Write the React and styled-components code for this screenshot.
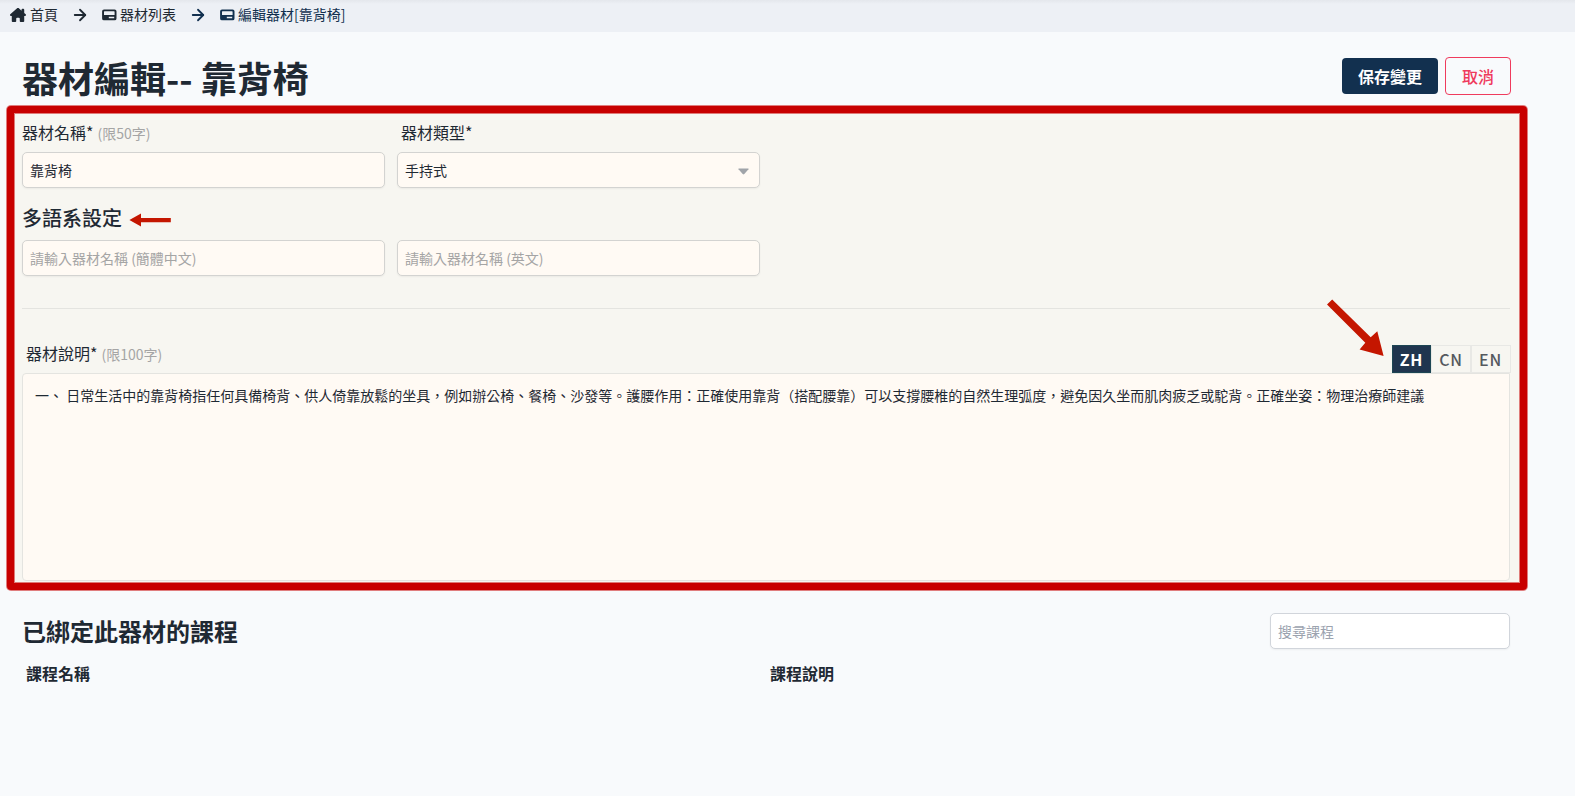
import { useState } from "react";
import styled, { createGlobalStyle, css } from "styled-components";
import { FaHouseChimney } from "react-icons/fa6";
import { ArrowRight } from "lucide-react";

const description =
  "一、 日常生活中的靠背椅指任何具備椅背、供人倚靠放鬆的坐具，例如辦公椅、餐椅、沙發等。護腰作用：正確使用靠背（搭配腰靠）可以支撐腰椎的自然生理弧度，避免因久坐而肌肉疲乏或駝背。正確坐姿：物理治療師建議";

const languages = ["ZH", "CN", "EN"];

function DeviceIcon() {
  return (
    <Device width="15" height="12" viewBox="0 0 15 12" fill="currentColor">
      <path
        fillRule="evenodd"
        d="M2 .4h10.6A1.9 1.9 0 0 1 14.5 2.3v7.1a1.9 1.9 0 0 1-1.9 1.9H2A1.9 1.9 0 0 1 .1 9.4V2.3A1.9 1.9 0 0 1 2 .4ZM2.6 2.2a.6.6 0 0 0-.6.6v3.1h10.6V2.8a.6.6 0 0 0-.6-.6ZM6.8 7.8v1.4h5.4V7.8Z"
      />
    </Device>
  );
}

export default function App() {
  const [language, setLanguage] = useState("ZH");

  return (
    <>
      <GlobalStyle />
      <Breadcrumb>
        <Crumb>
          <FaHouseChimney size={16} />
          首頁
        </Crumb>
        <ArrowRight size={18} strokeWidth={2.4} />
        <Crumb>
          <DeviceIcon />
          器材列表
        </Crumb>
        <ArrowRight size={18} strokeWidth={2.4} color="#12304f" />
        <Crumb $current>
          <DeviceIcon />
          編輯器材[靠背椅]
        </Crumb>
      </Breadcrumb>

      <PageHeader>
        <PageTitle>器材編輯-- 靠背椅</PageTitle>
        <Actions>
          <SaveButton type="button">保存變更</SaveButton>
          <CancelButton type="button">取消</CancelButton>
        </Actions>
      </PageHeader>

      <Panel>
        <FieldGrid>
          <Label>
            器材名稱*<Hint>(限50字)</Hint>
          </Label>
          <Label $indent={4}>器材類型*</Label>
          <Input defaultValue="靠背椅" />
          <SelectBox>
            手持式
            <Caret width="11" height="7" viewBox="0 0 11 7">
              <path d="M.9.4h9.2q.9 0 .4.8L6.3 6q-.8.8-1.6 0L.5 1.2Q0 .4.9.4Z" />
            </Caret>
          </SelectBox>
        </FieldGrid>

        <SectionTitle>
          多語系設定
          <svg width="42" height="14" viewBox="0 0 42 14" fill="#c41600">
            <path d="M.4 7 12 .5v4.5h29.8v4.2H12v4.4Z" />
          </svg>
        </SectionTitle>
        <FieldGrid>
          <Input placeholder="請輸入器材名稱 (簡體中文)" />
          <Input placeholder="請輸入器材名稱 (英文)" />
        </FieldGrid>

        <Divider />

        <EditorHeader>
          <Label $indent={4}>
            器材說明*<Hint>(限100字)</Hint>
          </Label>
          <Tabs>
            <Pointer width="58" height="58" viewBox="0 0 58 58" fill="#c41600">
              <path d="M5.2.4 43.7 38.3 50.3 32.2 56.6 57 32.6 50.4 38.3 43.8 0 5.6Z" />
            </Pointer>
            {languages.map((item) => (
              <Tab
                key={item}
                type="button"
                $active={item === language}
                onClick={() => setLanguage(item)}
              >
                {item}
              </Tab>
            ))}
          </Tabs>
        </EditorHeader>
        <Editor defaultValue={description} />
      </Panel>

      <CourseHeader>
        <CourseTitle>已綁定此器材的課程</CourseTitle>
        <SearchInput placeholder="搜尋課程" />
      </CourseHeader>
      <CourseTable>
        <span>課程名稱</span>
        <span>課程說明</span>
      </CourseTable>
    </>
  );
}

const GlobalStyle = createGlobalStyle`
  * {
    box-sizing: border-box;
  }

  body {
    margin: 0;
    background: #f8fafc;
    color: #1f2933;
    font-family: "Noto Sans CJK TC", sans-serif;
    overflow: hidden;
  }

  button, input, textarea {
    font-family: inherit;
  }
`;

const Breadcrumb = styled.nav`
  display: flex;
  align-items: center;
  gap: 13px;
  height: 32px;
  padding: 0 10px 5px;
  background: linear-gradient(#e4e7ec, #edf0f5 4px);

  svg {
    margin-top: 2px;
  }
`;

const Crumb = styled.span`
  display: flex;
  align-items: center;
  gap: 4px;
  font-size: 14px;
  line-height: 20px;
  color: ${(props) => (props.$current ? "#12304f" : "#1f2933")};
`;

const Device = styled.svg`
  margin-right: -1px;
`;

const PageHeader = styled.header`
  display: flex;
  justify-content: space-between;
  align-items: center;
  height: 74px;
  padding: 14px 64px 0 22px;
`;

const PageTitle = styled.h1`
  margin: 2px 0 0;
  font-size: 36px;
  line-height: 44px;
  font-weight: 700;
`;

const Actions = styled.div`
  display: flex;
  align-items: center;
  gap: 7px;
`;

const buttonBase = css`
  border-radius: 4px;
  font-size: 16px;
  line-height: 24px;
  padding: 0;
  cursor: pointer;
`;

const SaveButton = styled.button`
  ${buttonBase}
  width: 96px;
  height: 36px;
  border: none;
  background: #12304f;
  color: white;
  font-weight: 700;
`;

const CancelButton = styled.button`
  ${buttonBase}
  width: 66px;
  height: 38px;
  border: 1px solid #ef3b5d;
  background: transparent;
  color: #ef3b5d;
  font-weight: 500;
`;

const Panel = styled.section`
  width: 1520px;
  height: 484px;
  margin-left: 7px;
  padding: 6px 10px 0 8px;
  border: 7px solid #c80000;
  border-radius: 4px;
  background: #f7f6f1;
  box-shadow:
    0 0 0 1px rgba(200, 0, 0, 0.5),
    inset 0 0 0 1px rgba(200, 0, 0, 0.5);
`;

const FieldGrid = styled.div`
  display: grid;
  grid-template-columns: 363px 363px;
  column-gap: 12px;
`;

const Label = styled.label`
  height: 33px;
  padding-left: ${(props) => props.$indent || 0}px;
  font-size: 16px;
  line-height: 26px;
`;

const Hint = styled.span`
  margin-left: 4px;
  font-size: 14px;
  color: #a5a5a5;
`;

const fieldBase = css`
  height: 36px;
  padding: 0 7px;
  border: 1px solid #d3d3d1;
  border-radius: 5px;
  background: #fffaf4;
  box-shadow: 0 1px 2px rgba(0, 0, 0, 0.05);
  color: #1f2933;
  font-size: 14px;
`;

const Input = styled.input`
  ${fieldBase}

  &::placeholder {
    color: #a5a5a5;
  }
`;

const SelectBox = styled.div`
  ${fieldBase}
  display: flex;
  align-items: center;
  justify-content: space-between;
  padding-right: 10px;
`;

const Caret = styled.svg`
  margin-top: 2px;
  fill: #a0a4a9;
`;

const SectionTitle = styled.h3`
  display: flex;
  align-items: center;
  gap: 7px;
  height: 52px;
  margin: 0;
  padding-top: 8px;
  font-size: 20px;
  line-height: 32px;
  font-weight: 500;

  svg {
    margin-top: 4px;
  }
`;

const Divider = styled.div`
  height: 1px;
  margin: 32px 0 36px;
  background: #e4e4e0;
`;

const EditorHeader = styled.div`
  display: flex;
  justify-content: space-between;
  height: 28px;

  label {
    line-height: 16px;
  }
`;

const Tabs = styled.div`
  display: flex;
  position: relative;
`;

const Pointer = styled.svg`
  position: absolute;
  right: 125px;
  bottom: 16px;
`;

const Tab = styled.button`
  width: ${(props) => (props.$active ? 39 : 40)}px;
  height: 28px;
  margin-right: ${(props) => (props.$active ? 0 : -0.5)}px;
  padding: 0;
  border: 1px solid ${(props) => (props.$active ? "#1d4654" : "#e8e8e5")};
  background: ${(props) => (props.$active ? "#20354f" : "transparent")};
  color: ${(props) => (props.$active ? "#ffffff" : "#55595e")};
  font-size: 16px;
  line-height: 26px;
  font-weight: ${(props) => (props.$active ? 700 : 500)};
  letter-spacing: 0.8px;
  cursor: pointer;
`;

const Editor = styled.textarea`
  display: block;
  width: 100%;
  height: 208px;
  padding: 9px 12px;
  border: 1px solid #e4e4e0;
  border-radius: 4px 0 4px 4px;
  background: #fffaf4;
  color: #1f2933;
  font-size: 14px;
  line-height: 24px;
  resize: none;
  outline: none;
`;

const CourseHeader = styled.div`
  display: flex;
  justify-content: space-between;
  align-items: center;
  margin-top: 23px;
  padding: 0 65px 0 22px;
`;

const CourseTitle = styled.h2`
  margin: 0;
  font-size: 24px;
  line-height: 36px;
  font-weight: 700;
`;

const SearchInput = styled(Input)`
  width: 240px;
  background: white;
  border-color: #d1d5db;

  &::placeholder {
    color: #9ca3af;
  }
`;

const CourseTable = styled.div`
  display: grid;
  grid-template-columns: 744px 744px;
  margin-top: 11px;
  padding-left: 26px;
  font-size: 16px;
  line-height: 26px;
  font-weight: 700;
`;
